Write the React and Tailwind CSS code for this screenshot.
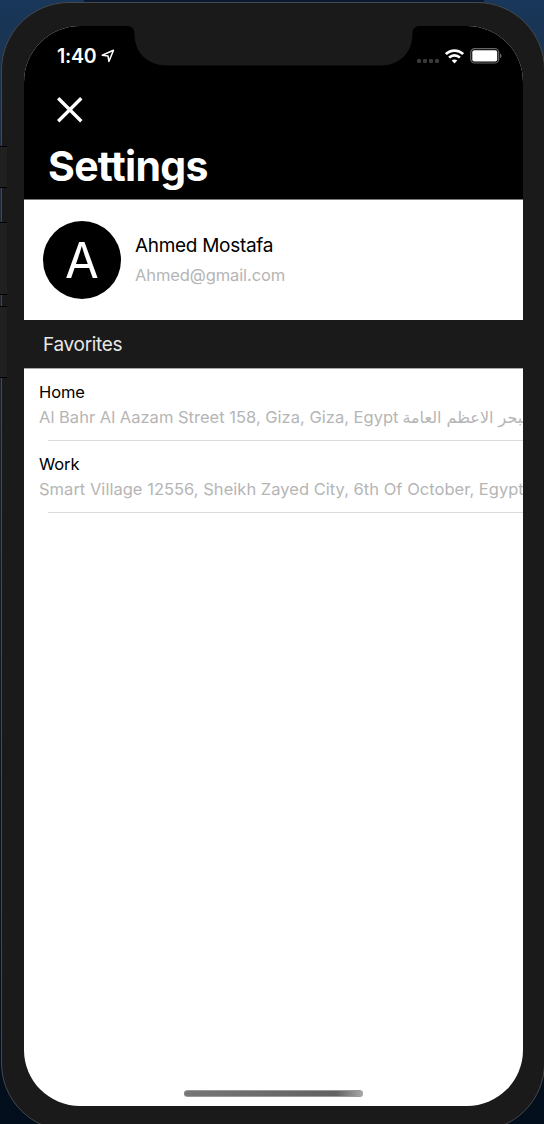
const favorites = [
  { name: "Home", address: "Al Bahr Al Aazam Street 158, Giza, Giza, Egypt", extra: "البحر الاعظم العامة", tracking: "tracking-[0.01px]" },
  { name: "Work", address: "Smart Village 12556, Sheikh Zayed City, 6th Of October, Egypt", extra: "", tracking: "tracking-[0.025px]" },
];

function Notch() {
  return (
    <svg className="absolute left-[102px] top-0" width="294" height="40" viewBox="0 0 294 40" fill="#1a1a1a">
      <path d="M0 0H294C289 0 286.500 2.500 286.500 8C286.500 27 273 39.500 255 39.500H41C22 39.500 8.500 27 8.500 8C8.500 2.500 6 0 0 0Z" />
    </svg>
  );
}

function StatusBar() {
  return (
    <div className="flex h-[60px] items-center justify-between pl-[33px] pr-[21px]">
      <div className="flex items-center gap-[5px] text-white">
        <span className="pt-[2px] text-[19.500px] font-semibold leading-none tracking-[-0.25px]">1:40</span>
        <svg width="14" height="14" viewBox="0 0 14 14" fill="none" stroke="white" strokeWidth="1.500" strokeLinejoin="round">
          <path d="M12.500 1.200L1.200 6.200L7 6.900L7.900 12.500Z" />
        </svg>
      </div>
      <div className="flex items-center">
        <div className="mr-[6px] mt-[9px] flex gap-[2px]">
          <i className="size-1 rounded-[1px] bg-[#393939]" />
          <i className="size-1 rounded-[1px] bg-[#393939]" />
          <i className="size-1 rounded-[1px] bg-[#393939]" />
          <i className="size-1 rounded-[1px] bg-[#393939]" />
        </div>
        <svg width="19" height="15" viewBox="0 0 19 15" fill="none" stroke="white" strokeWidth="2.700">
          <path d="M.9 5.100C5.700.4 13.300.4 18.100 5.100" />
          <path d="M4.100 8.600C7.100 5.700 11.900 5.700 14.900 8.600" />
          <path d="M9.500 14.500L6.700 11.600C8.200 10.100 10.800 10.100 12.300 11.600Z" fill="white" stroke="none" />
        </svg>
        <svg className="ml-[6px]" width="32" height="16" viewBox="0 0 32 16">
          <rect x=".7" y=".7" width="28" height="14.300" rx="4" fill="none" stroke="#666" strokeWidth="1.200" />
          <rect x="2.300" y="2.300" width="24.900" height="11.200" rx="2" fill="white" />
          <path d="M30 5.500C32 6.300 32 9.300 30 10.200Z" fill="#666" />
        </svg>
      </div>
    </div>
  );
}

export default function App() {
  return (
    <div className="relative h-[1124px] w-[544px] overflow-hidden bg-linear-to-b from-[#18375a] via-[#20252d] via-25% to-[#020e1b] pl-px pt-[2px] font-['Inter','Noto_Sans',sans-serif]">
      <div className="absolute right-[60px] top-0 h-[2px] w-[400px] bg-[#0b1930]" />
      <div className="h-[1129px] w-[544px] rounded-[68px] border border-[#45484c] bg-[#1a1a1a] pl-[22px] pt-[23px]">
        <main className="relative flex h-[1080px] w-[499px] flex-col overflow-hidden rounded-[56px] bg-white">
          <header className="h-[173px] shrink-0 bg-black">
            <StatusBar />
            <svg className="ml-[33px] mt-[11px]" width="26" height="26" viewBox="0 0 26 26" stroke="white" strokeWidth="3.400">
              <path d="M1.200 1.200L24.300 24.300M24.300 1.200L1.200 24.300" />
            </svg>
            <h1 className="ml-[24px] mt-[18px] text-[41px] font-bold leading-[50px] tracking-[-0.7px] text-white">Settings</h1>
          </header>
          <section className="flex h-[121px] shrink-0 items-center border-t border-[#777] pl-[19px]">
            <div className="flex size-[78px] items-center justify-center rounded-full bg-black text-[49px] leading-none text-white">A</div>
            <div className="ml-[14px]">
              <p className="text-[19px] leading-[28px] tracking-[-0.3px] text-black">Ahmed Mostafa</p>
              <p className="mt-px text-[16.500px] leading-[28px] tracking-[-0.1px] text-[#b5b5b5]">Ahmed@gmail.com</p>
            </div>
          </section>
          <h2 className="flex h-[48px] shrink-0 items-center bg-[#1a1a1a] pl-[19px] pt-[2px] text-[19px] tracking-[-0.3px] text-[#e8e8e8]">Favorites</h2>
          <ul className="border-t border-[#aaa]">
            {favorites.map((item) => (
              <li key={item.name} className="h-[72px] whitespace-nowrap pl-[15px] pt-[11px]">
                <p className="text-[16.500px] leading-[24px] tracking-[-0.1px] text-black">{item.name}</p>
                <div className={"flex h-[26px] items-center text-[16.500px] text-[#b5b5b5] " + item.tracking}>
                  <span>{item.address}</span>
                  {item.extra && <span dir="rtl" className="ml-1 pt-px font-['DejaVu_Sans','Noto_Sans',sans-serif] text-[16px] tracking-normal">{item.extra}</span>}
                </div>
                <div className="ml-[9px] mt-[10px] h-px bg-[#dcdcdc]" />
              </li>
            ))}
          </ul>
          <div className="mb-[9px] ml-[160px] mt-auto h-[7px] w-[179px] rounded-full border-y border-[#999] bg-linear-to-r from-[#777] via-[#626262] via-85% to-[#aaa]" />
          <Notch />
        </main>
      </div>
      <i className="absolute left-0 top-[146px] h-[42px] w-[7px] border-y border-black bg-[#202020]" />
      <i className="absolute left-0 top-[222px] h-[73px] w-[7px] border-y border-black bg-[#202020]" />
      <i className="absolute left-0 top-[306px] h-[72px] w-[7px] border-y border-black bg-[#202020]" />
    </div>
  );
}
